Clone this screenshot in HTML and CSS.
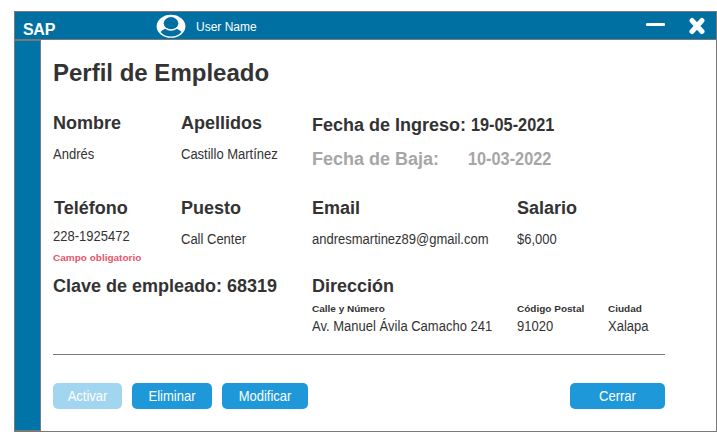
FILE: index.html
```html
<!DOCTYPE html>
<html lang="es">
<head>
<meta charset="utf-8">
<title>Perfil de Empleado</title>
<link rel="stylesheet" href="styles.css">
</head>
<body>
<div class="window">
  <header class="titlebar">
    <span class="brand">SAP</span>
    <svg class="avatar" width="30" height="24" viewBox="0 0 30 24">
      <ellipse cx="15" cy="12.300" rx="14.400" ry="11.500" fill="#fff"/>
      <path d="M4.500 18C6 16 8.500 15.300 10.500 14.200C13 16 17 16 19.500 14.200C21.500 15.300 24 16 25.500 18C23 21 19 22.500 15 22.500S7 21 4.500 18Z" fill="#0070a3"/>
      <ellipse cx="15" cy="9.500" rx="8.200" ry="7.300" fill="#fff"/>
      <ellipse cx="15" cy="9.200" rx="7.300" ry="6.100" fill="#0070a3"/>
    </svg>
    <span class="user">User Name</span>
    <svg class="minimize" width="19" height="3" viewBox="0 0 19 3"><rect width="19" height="3" rx="1" fill="#fff"/></svg>
    <svg class="close" width="16" height="18" viewBox="0 0 16 18"><path d="M3 3.500L13 14.500M13 3.500L3 14.500" stroke="#fff" stroke-width="5" stroke-linecap="round"/></svg>
  </header>
  <div class="body">
    <aside class="sidebar"></aside>
    <main class="content">
      <h1>Perfil de Empleado</h1>
      <section class="row row-name">
        <div><h2>Nombre</h2><p class="value">Andrés</p></div>
        <div><h2>Apellidos</h2><p class="value">Castillo Martínez</p></div>
        <div class="dates">
          <h2 class="date-line"><span class="date-label">Fecha de Ingreso:</span><span class="date">19-05-2021</span></h2>
          <h2 class="date-line inactive"><span class="date-label">Fecha de Baja:</span><span class="date">10-03-2022</span></h2>
        </div>
      </section>
      <section class="row row-contact">
        <div class="phone"><h2>Teléfono</h2><p class="value">228-1925472</p><p class="error">Campo obligatorio</p></div>
        <div><h2>Puesto</h2><p class="value">Call Center</p></div>
        <div><h2>Email</h2><p class="value">andresmartinez89@gmail.com</p></div>
        <div><h2>Salario</h2><p class="value">$6,000</p></div>
      </section>
      <section class="row row-address">
        <h2 class="key">Clave de empleado: 68319</h2>
        <div class="address">
          <h2>Dirección</h2>
          <div class="fields">
            <div><p class="label">Calle y Número</p><p class="value">Av. Manuel Ávila Camacho 241</p></div>
            <div><p class="label">Código Postal</p><p class="value">91020</p></div>
            <div><p class="label">Ciudad</p><p class="value">Xalapa</p></div>
          </div>
        </div>
      </section>
      <footer class="actions">
        <button class="activate" disabled><span>Activar</span></button>
        <button class="delete"><span>Eliminar</span></button>
        <button class="modify"><span>Modificar</span></button>
        <button class="dismiss"><span>Cerrar</span></button>
      </footer>
    </main>
  </div>
</div>
</body>
</html>
```
FILE: styles.css
```css
* { box-sizing: border-box; }
body {
  margin: 0;
  padding: 11px 0 0 14px;
  background: #fff;
  color: #333;
  font-family: "Liberation Sans", Arial, sans-serif;
}
h1, h2, p { margin: 0; white-space: nowrap; }

.window {
  display: flex;
  flex-direction: column;
  width: 703px;
  height: 421px;
  border: 1px solid #797979;
}
.titlebar {
  display: flex;
  align-items: flex-start;
  height: 27px;
  padding: 0 11px 0 8px;
  background: #0070a3;
  color: #fff;
}
.brand { width: 133px; padding-top: 9px; font-size: 16px; font-weight: bold; line-height: 18px; letter-spacing: -0.3px; }
.avatar { margin-top: 2px; }
.user { margin-left: 10px; padding-top: 8px; font-size: 12px; line-height: 14px; }
.minimize { margin: 11px 0 0 auto; }
.close { margin: 5px 0 0 24px; }

.body { display: flex; flex: 1; border-top: 1px solid #797979; }
.sidebar {
  width: 26px;
  background: #0073a7;
  border-top: 1px solid #797979;
  border-right: 1px solid #797979;
  border-bottom: 1px solid #797979;
}
.content { width: 624px; padding: 19px 0 0 12px; }

h1 { height: 54px; font-size: 24px; line-height: 28px; }
h2 { font-size: 18px; line-height: 20px; }
.value { font-size: 13px; line-height: 16px; }
.value, .actions span { transform: translateY(1px) scaleY(1.06); transform-origin: 0 78%; }
.label, .error { font-size: 10px; font-weight: bold; line-height: 12px; transform: scaleY(0.93); }
.error { color: #e8546b; }

.row { display: grid; grid-template-columns: 128px 131px 205px 148px; }
.row-name { height: 85px; }
.row-name .value { margin-top: 13px; }
.dates { padding-top: 2px; }
.date-line { display: flex; margin-bottom: 14px; }
.date-label { flex: 0 0 159px; }
.date { flex: none; transform: scaleX(0.905); transform-origin: left; }
.inactive { color: #a6a6a6; }
.inactive .date-label { flex-basis: 156px; }

.row-contact { height: 78px; }
.row-contact .value { margin-top: 13px; }
.phone h2 { padding-left: 1px; }
.row-contact .phone .value { margin-top: 10px; }
.phone .error { margin-top: 8px; }

.row-address { height: 79px; border-bottom: 1px solid #797979; }
.key { grid-column: span 2; }
.address { grid-column: span 2; }
.fields { display: grid; grid-template-columns: 205px 91px 57px; margin-top: 7px; }
.fields .value { margin-top: 3px; }

.actions { display: flex; gap: 10px; padding-top: 28px; }
.actions button {
  height: 26px;
  padding: 0;
  border: 0;
  border-radius: 5px;
  background: #1e98d9;
  color: #fff;
  font: 13px/26px "Liberation Sans", Arial, sans-serif;
}
.actions span { display: block; transform-origin: 50% 68%; }
.actions .activate { width: 69px; background: #a2d5f0; }
.actions .delete { width: 80px; }
.actions .modify { width: 86px; }
.actions .dismiss { width: 95px; margin-left: auto; }
```
